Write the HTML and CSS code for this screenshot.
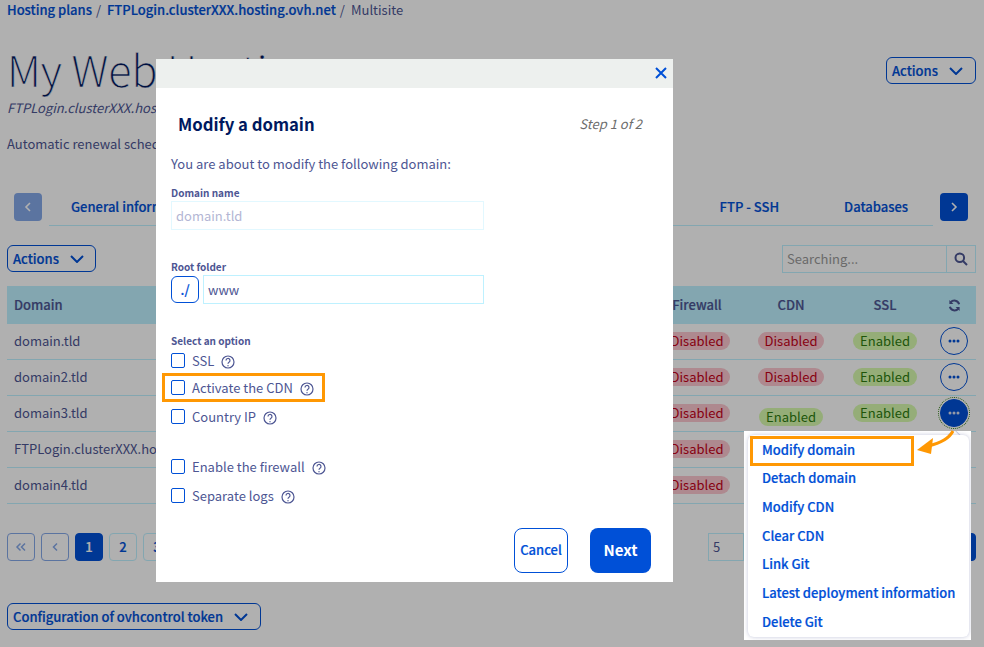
FILE: index.html
```html
<!DOCTYPE html>
<html lang="en">
<head>
<meta charset="utf-8">
<title>Multisite</title>
<link rel="stylesheet" href="styles.css">
</head>
<body>
<div class="page">
  <nav class="crumbs"><a>Hosting plans</a><span class="sep">/</span><a>FTPLogin.clusterXXX.hosting.ovh.net</a><span class="sep">/</span><span class="cur">Multisite</span></nav>
  <header class="head">
    <div>
      <h1>My Web Hosting</h1>
      <p class="sub">FTPLogin.clusterXXX.hosting.ovh.net</p>
      <p class="renew">Automatic renewal scheduled</p>
    </div>
    <button class="btn-outline head-actions">Actions<svg class="chev" viewBox="0 0 14 8"><path d="M1 1l6 6 6-6"/></svg></button>
  </header>
  <div class="tabs">
    <button class="sq sq-faded"><svg viewBox="0 0 8 12"><path d="M6 2L2 6l4 4"/></svg></button>
    <div class="tablist">
      <a>General information</a>
      <a class="push">FTP - SSH</a>
      <a>Databases</a>
    </div>
    <button class="sq sq-on"><svg viewBox="0 0 8 12"><path d="M2 2l4 4-4 4"/></svg></button>
  </div>
  <div class="tools">
    <button class="btn-outline">Actions<svg class="chev" viewBox="0 0 14 8"><path d="M1 1l6 6 6-6"/></svg></button>
    <div class="search">
      <span class="search-input">Searching...</span>
      <span class="search-btn"><svg viewBox="0 0 14 14"><circle cx="5.8" cy="5.8" r="4.3"/><path d="M9 9l4 4"/></svg></span>
    </div>
  </div>
  <table class="grid">
    <colgroup><col class="c-dom"><col class="c-b"><col class="c-b"><col class="c-b"><col class="c-act"></colgroup>
    <thead>
      <tr><th class="left">Domain</th><th>Firewall</th><th>CDN</th><th>SSL</th><th><svg class="refresh" viewBox="0 0 14 14"><path d="M12 5.600A5.200 5.200 0 0 0 2.900 3.700M2 8.400a5.200 5.200 0 0 0 9.100 1.900"/><path class="fill" d="M1.500 1v4.300h4.300zM12.500 13V8.700H8.200z"/></svg></th></tr>
    </thead>
    <tbody>
      <tr><td class="left">domain.tld</td><td><span class="pill off">Disabled</span></td><td><span class="pill off">Disabled</span></td><td><span class="pill on">Enabled</span></td><td><button class="dots"><svg viewBox="0 0 12 4"><circle cx="2" cy="2" r="1.500"/><circle cx="6" cy="2" r="1.500"/><circle cx="10" cy="2" r="1.500"/></svg></button></td></tr>
      <tr><td class="left">domain2.tld</td><td><span class="pill off">Disabled</span></td><td><span class="pill off">Disabled</span></td><td><span class="pill on">Enabled</span></td><td><button class="dots"><svg viewBox="0 0 12 4"><circle cx="2" cy="2" r="1.500"/><circle cx="6" cy="2" r="1.500"/><circle cx="10" cy="2" r="1.500"/></svg></button></td></tr>
      <tr><td class="left">domain3.tld</td><td><span class="pill off">Disabled</span></td><td><span class="pill on low">Enabled</span></td><td><span class="pill on">Enabled</span></td><td><button class="dots dots-on"><svg viewBox="0 0 12 4"><circle cx="2" cy="2" r="1.500"/><circle cx="6" cy="2" r="1.500"/><circle cx="10" cy="2" r="1.500"/></svg></button></td></tr>
      <tr><td class="left">FTPLogin.clusterXXX.hosting.ovh.net</td><td><span class="pill off">Disabled</span></td><td></td><td></td><td></td></tr>
      <tr><td class="left">domain4.tld</td><td><span class="pill off">Disabled</span></td><td></td><td></td><td></td></tr>
    </tbody>
  </table>
  <div class="pager">
    <button class="pg pg-faded"><svg viewBox="0 0 12 12"><path d="M5.500 2.500L2 6l3.500 3.500M10 2.500L6.500 6l3.500 3.500"/></svg></button>
    <button class="pg pg-faded"><svg viewBox="0 0 12 12"><path d="M8 2.500L4.500 6 8 9.500"/></svg></button>
    <button class="pg pg-on">1</button>
    <button class="pg">2</button>
    <button class="pg">3</button>
    <span class="per">5</span>
    <button class="pg pg-on"></button>
  </div>
  <button class="btn-outline token">Configuration of ovhcontrol token<svg class="chev" viewBox="0 0 14 8"><path d="M1 1l6 6 6-6"/></svg></button>
</div>

<div class="overlay"></div>

<section class="modal">
  <div class="modal-bar"><svg class="close" viewBox="0 0 12 12"><path d="M1 1l10 10M11 1L1 11"/></svg></div>
  <div class="modal-body">
    <div class="modal-head"><h2>Modify a domain</h2><span class="step">Step 1 of 2</span></div>
    <p class="intro">You are about to modify the following domain:</p>
    <label class="lbl">Domain name</label>
    <div class="field field-off">domain.tld</div>
    <label class="lbl lbl-root">Root folder</label>
    <div class="root">
      <button class="root-btn">./</button>
      <div class="field field-root">www</div>
    </div>
    <label class="lbl lbl-opt">Select an option</label>
    <div class="check"><i class="box"></i>SSL<svg class="q" viewBox="0 0 14 14"><circle cx="7" cy="7" r="6"/><path d="M5 5.500a2 2 0 1 1 3 1.700c-.7.400-1 .8-1 1.500"/><path class="dot" d="M7 10.300v.9"/></svg></div>
    <div class="check check-mark"><i class="box"></i>Activate the CDN<svg class="q" viewBox="0 0 14 14"><circle cx="7" cy="7" r="6"/><path d="M5 5.500a2 2 0 1 1 3 1.700c-.7.400-1 .8-1 1.500"/><path class="dot" d="M7 10.300v.9"/></svg></div>
    <div class="check"><i class="box"></i>Country IP<svg class="q" viewBox="0 0 14 14"><circle cx="7" cy="7" r="6"/><path d="M5 5.500a2 2 0 1 1 3 1.700c-.7.400-1 .8-1 1.500"/><path class="dot" d="M7 10.300v.9"/></svg></div>
    <div class="check check-gap"><i class="box"></i>Enable the firewall<svg class="q" viewBox="0 0 14 14"><circle cx="7" cy="7" r="6"/><path d="M5 5.500a2 2 0 1 1 3 1.700c-.7.400-1 .8-1 1.500"/><path class="dot" d="M7 10.300v.9"/></svg></div>
    <div class="check"><i class="box"></i>Separate logs<svg class="q" viewBox="0 0 14 14"><circle cx="7" cy="7" r="6"/><path d="M5 5.500a2 2 0 1 1 3 1.700c-.7.400-1 .8-1 1.500"/><path class="dot" d="M7 10.300v.9"/></svg></div>
    <div class="modal-foot">
      <button class="m-btn m-cancel">Cancel</button>
      <button class="m-btn m-next">Next</button>
    </div>
  </div>
</section>

<div class="menu">
  <ul class="menu-in">
    <li class="menu-mark">Modify domain</li>
    <li>Detach domain</li>
    <li>Modify CDN</li>
    <li>Clear CDN</li>
    <li>Link Git</li>
    <li>Latest deployment information</li>
    <li>Delete Git</li>
  </ul>
</div>

<svg class="arrow" viewBox="0 0 60 36"><path class="arrow-line" d="M37 1C33 9 25 13 12 16"/><path class="arrow-head" d="M1 20L17 8l-2 16z"/></svg>
</body>
</html>
```
FILE: styles.css
```css
*, *::before { box-sizing: border-box; }
html, body { margin: 0; height: 647px; overflow: hidden; }
body {
  position: relative;
  background: #fff;
  color: #4d5693;
  font: 400 13px/18px "Noto Sans CJK SC", "Noto Sans CJK JP", "Source Sans Pro", sans-serif;
}
button { font: inherit; background: none; padding: 0; cursor: pointer; }
h1, h2, p, ul { margin: 0; padding: 0; }

.page { height: 647px; padding: 0 8px 0 7px; }

.crumbs, .btn-outline, .tablist, .grid th, .pg, .root-btn, .m-cancel, .menu-in { -webkit-text-stroke: .2px; }

.crumbs { display: flex; height: 20px; align-items: center; font-weight: 500; color: #0050d7; }
.crumbs .sep { margin: 0 6px 0 4px; font-weight: 400; color: #4d5693; -webkit-text-stroke: 0; }
.crumbs .cur { font-weight: 400; color: #4d5693; -webkit-text-stroke: 0; }

.head { display: flex; justify-content: space-between; align-items: flex-start; margin-top: 20px; height: 133px; }
h1 { font-size: 43px; line-height: 56px; font-weight: 300; color: #00185e; -webkit-text-stroke: .5px #fff; }
.sub { margin-top: 3px; font-style: italic; }
.renew { margin-top: 18px; }
.head-actions { margin-top: 17px; width: 90px; padding-left: 6px; }

.btn-outline {
  display: inline-flex; align-items: center; gap: 11px;
  height: 27px; padding: 0 0 0 5px; white-space: nowrap;
  border: 1px solid #0050d7; border-radius: 6px;
  color: #0050d7; font-weight: 500;
}
.chev { width: 14px; height: 8px; fill: none; stroke: #0050d7; stroke-width: 2; }

.tabs { display: flex; align-items: flex-start; gap: 7px; margin-top: 20px; padding-left: 7px; padding-right: 8px; height: 52px; }
.sq { flex: none; width: 28px; height: 28px; border: 0; border-radius: 4px; display: flex; align-items: center; justify-content: center; }
.sq svg { width: 8px; height: 12px; fill: none; stroke: #fff; stroke-width: 1.600; }
.sq-faded { background: #85a8e8; }
.sq-on { background: #0050d7; }
.tablist { flex: 1; display: flex; gap: 65px; height: 33px; padding: 5px 25px 0 22px; border-bottom: 1px solid #bef1ff; font-weight: 500; color: #0050d7; }
.push { margin-left: auto; }

.tools { display: flex; justify-content: space-between; align-items: flex-start; height: 41px; }
.tools .btn-outline { width: 89px; }
.search { display: flex; width: 194px; height: 28px; border: 1px solid #bef1ff; }
.search-input { flex: 1; padding: 4px; color: #9a9a9a; }
.search-btn { width: 29px; border-left: 1px solid #bef1ff; display: flex; align-items: center; justify-content: center; }
.search-btn svg { width: 14px; height: 14px; fill: none; stroke: #4d5693; stroke-width: 2; }

.grid { width: 969px; border-collapse: separate; border-spacing: 0; table-layout: fixed; }
.c-dom { width: 643px; }
.c-b { width: 94px; }
.c-act { width: 44px; }
.grid th { height: 38px; padding: 0; background: #bef1ff; font-weight: 500; text-align: center; color: #4d5693; }
.grid td { height: 36px; padding: 0 0 2px; text-align: center; border-bottom: 1px solid #bef1ff; }
.grid .left { text-align: left; padding-left: 7px; white-space: nowrap; overflow: hidden; }
.refresh { width: 13px; height: 13px; vertical-align: -2px; fill: none; stroke: #4d5693; stroke-width: 2.200; }
.refresh .fill { fill: #4d5693; stroke: none; }

.pill { display: inline-block; height: 18px; line-height: 18px; padding: 0 7px; border-radius: 9px; }
.off { background: #fdc7cf; color: #c40018; }
.on { background: #d8fbae; color: #2d7b0f; }
.low { position: relative; top: 4px; }

.dots { display: inline-flex; align-items: center; justify-content: center; width: 28px; height: 28px; border: 1px solid #0050d7; border-radius: 50%; vertical-align: middle; }
.dots svg { width: 12px; height: 4px; fill: #0050d7; }
.dots-on { background: #0050d7; outline: 1.500px dotted #2d7b0f; outline-offset: 1px; }
.dots-on svg { fill: #d8dff2; }

.pager { display: flex; gap: 6px; margin-top: 29px; height: 28px; }
.pg { width: 28px; height: 28px; border: 1px solid #bef1ff; border-radius: 4px; color: #0050d7; font-weight: 500; display: flex; align-items: center; justify-content: center; }
.pg svg { width: 12px; height: 12px; fill: none; stroke: #85a8e8; stroke-width: 1.500; }
.pg-faded { border-color: #85a8e8; }
.pg-on { background: #0050d7; border-color: #0050d7; color: #fff; }
.per { margin-left: auto; margin-right: 198px; width: 36px; border: 1px solid #bef1ff; padding: 4px; }

.token { margin-top: 42px; width: 254px; }

.overlay { position: absolute; inset: 0; background: rgba(0, 0, 0, .31); }

.modal { position: absolute; left: 156px; top: 59px; width: 517px; height: 523px; background: #fff; }
.modal-bar { height: 29px; background: #edf0ee; display: flex; justify-content: flex-end; align-items: center; padding: 0 6px 1px 0; }
.close { width: 12px; height: 12px; fill: none; stroke: #0050d7; stroke-width: 2; }
.modal-body { padding: 0 22px 0 15px; }
.modal-head { display: flex; justify-content: space-between; align-items: center; height: 32px; margin-top: 20px; padding-left: 7px; padding-right: 9px; }
h2 { font-size: 16.700px; font-weight: 700; color: #00185e; }
.step { font-style: italic; color: #6c6c6c; }
.intro { margin-top: 15px; }
.lbl { display: block; font-size: 10px; font-weight: 700; line-height: 14px; }
.intro + .lbl { margin-top: 13px; }
.field { height: 29px; width: 313px; border: 1px solid #bef1ff; padding: 5px 4px; }
.field-off { color: #b3b6d4; border-color: #e2f8ff; margin-top: 1px; }
.lbl-root { margin-top: 30px; }
.lbl-opt { margin-top: 30px; }
.root { display: flex; gap: 4px; margin-top: 1px; }
.root-btn { width: 28px; height: 27px; margin-top: 1px; border: 1px solid #0050d7; border-radius: 6px; color: #0050d7; font-weight: 500; }
.field-root { flex: none; width: 281px; }
.check { display: flex; align-items: center; height: 29px; }
.lbl-opt + .check { margin-top: 0; height: 25px; }
.box { flex: none; width: 14px; height: 15px; margin-right: 7px; border: 1px solid #0050d7; border-radius: 2px; }
.q { flex: none; width: 14px; height: 14px; margin-left: 7px; margin-top: 3px; fill: none; stroke: #4d5693; stroke-width: 1.200; }
.q .dot { stroke-width: 1.400; }
.check-mark { position: relative; }
.check-mark::before { content: ""; position: absolute; left: -9px; top: 0; width: 163px; height: 29px; border: 3px solid #ff9803; }
.check-gap { margin-top: 21px; }
.modal-foot { display: flex; justify-content: flex-end; gap: 22px; margin-top: 18px; }
.m-btn { height: 45px; border-radius: 8px; font-weight: 500; padding-bottom: 1px; }
.m-cancel { width: 54px; border: 1px solid #0050d7; color: #0050d7; }
.m-next { width: 61px; border: 0; background: #0050d7; color: #fff; font-size: 15px; font-weight: 700; }

.menu { position: absolute; left: 744px; top: 431px; width: 227px; height: 209px; background: #fff; padding: 4px 2px 3px 4px; overflow: hidden; }
.menu::before { content: ""; position: absolute; left: 204px; top: 0; width: 12px; height: 12px; background: #fff; border: 1px solid #c9cde4; transform: rotate(45deg); }
.menu-in { position: relative; list-style: none; height: 100%; background: #fff; border-radius: 6px; box-shadow: 0 0 4px rgba(77, 86, 147, .35); padding: .5px 0 0 14px; color: #0050d7; font-weight: 500; }
.menu-in li { height: 28.700px; line-height: 28px; white-space: nowrap; }
.menu-mark { position: relative; }
.menu-mark::before { content: ""; position: absolute; left: -12px; top: 0; width: 164px; height: 30px; border: 3px solid #ff9803; }

.arrow { position: absolute; left: 916px; top: 430px; width: 60px; height: 36px; fill: none; }
.arrow-line { stroke: #ff9803; stroke-width: 3; }
.arrow-head { fill: #ff9803; }
```
